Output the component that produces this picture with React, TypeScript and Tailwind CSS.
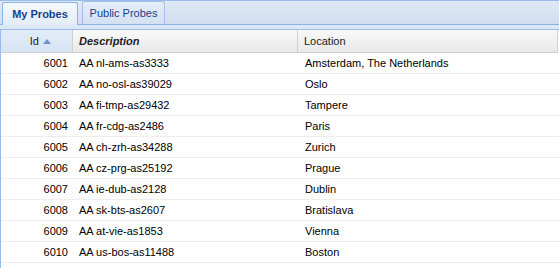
const probes = [
  { id: 6001, desc: "AA nl-ams-as3333", loc: "Amsterdam, The Netherlands" },
  { id: 6002, desc: "AA no-osl-as39029", loc: "Oslo" },
  { id: 6003, desc: "AA fi-tmp-as29432", loc: "Tampere" },
  { id: 6004, desc: "AA fr-cdg-as2486", loc: "Paris" },
  { id: 6005, desc: "AA ch-zrh-as34288", loc: "Zurich" },
  { id: 6006, desc: "AA cz-prg-as25192", loc: "Prague" },
  { id: 6007, desc: "AA ie-dub-as2128", loc: "Dublin" },
  { id: 6008, desc: "AA sk-bts-as2607", loc: "Bratislava" },
  { id: 6009, desc: "AA at-vie-as1853", loc: "Vienna" },
  { id: 6010, desc: "AA us-bos-as11488", loc: "Boston" },
];

export default function App() {
  return (
    <div className="w-[559px] h-[268px] overflow-hidden bg-white font-['Liberation_Sans',Arial,sans-serif] text-[11px] text-black">
      {/* tab strip */}
      <div className="h-[30px] border-t border-[#99bbe8] bg-gradient-to-b from-[#dee8f6] to-[#cedcf0] flex flex-col">
        <div className="h-[24px] flex items-end pl-[2px] gap-[4px] border-b border-[#8db2e3]">
          <div className="h-[23px] w-[76px] -mb-px pt-px rounded-t-[3px] border border-b-0 border-[#8db2e3] bg-gradient-to-b from-[#f4f8fd] to-[#e3ecf8] flex items-center justify-center font-bold text-[#15428b]">
            My Probes
          </div>
          <div className="h-[23px] w-[83px] pt-px rounded-t-[3px] border border-b-0 border-[#a4c0e6] bg-gradient-to-b from-[#e6eef9] to-[#d2e0f2] flex items-center justify-center text-[#15428b]">
            Public Probes
          </div>
        </div>
        <div className="flex-1 bg-[#dde8f6] border-b border-[#99bbe8]" />
      </div>

      {/* grid */}
      <div className="border-l border-[#99bbe8] h-full">
        <div className="flex h-[23px] w-[557px] border-b border-r border-[#d0d0d0] bg-gradient-to-b from-[#f9f9f9] to-[#e9e9e9] text-[#222]">
          <div className="w-[72px] flex items-center justify-end pr-[21px] border-r border-[#d0d0d0] bg-gradient-to-b from-[#e3ecf8] to-[#d7e4f4]">
            Id
            <svg width="8" height="5" viewBox="0 0 8 5" className="ml-[4px]">
              <path d="M0 5 L4 0 L8 5 Z" fill="#6a93cf" />
            </svg>
          </div>
          <div className="w-[225px] flex items-center pl-[6px] border-r border-[#d0d0d0] font-bold italic">
            Description
          </div>
          <div className="flex-1 flex items-center pl-[6px]">Location</div>
        </div>
        {probes.map((p) => (
          <div key={p.id} className="flex h-[21px] border-b border-[#ededed] items-center text-black">
            <div className="w-[72px] text-right pr-[5px]">{p.id}</div>
            <div className="w-[225px] pl-[6px]">{p.desc}</div>
            <div className="flex-1 pl-[7px]">{p.loc}</div>
          </div>
        ))}
      </div>
    </div>
  );
}
